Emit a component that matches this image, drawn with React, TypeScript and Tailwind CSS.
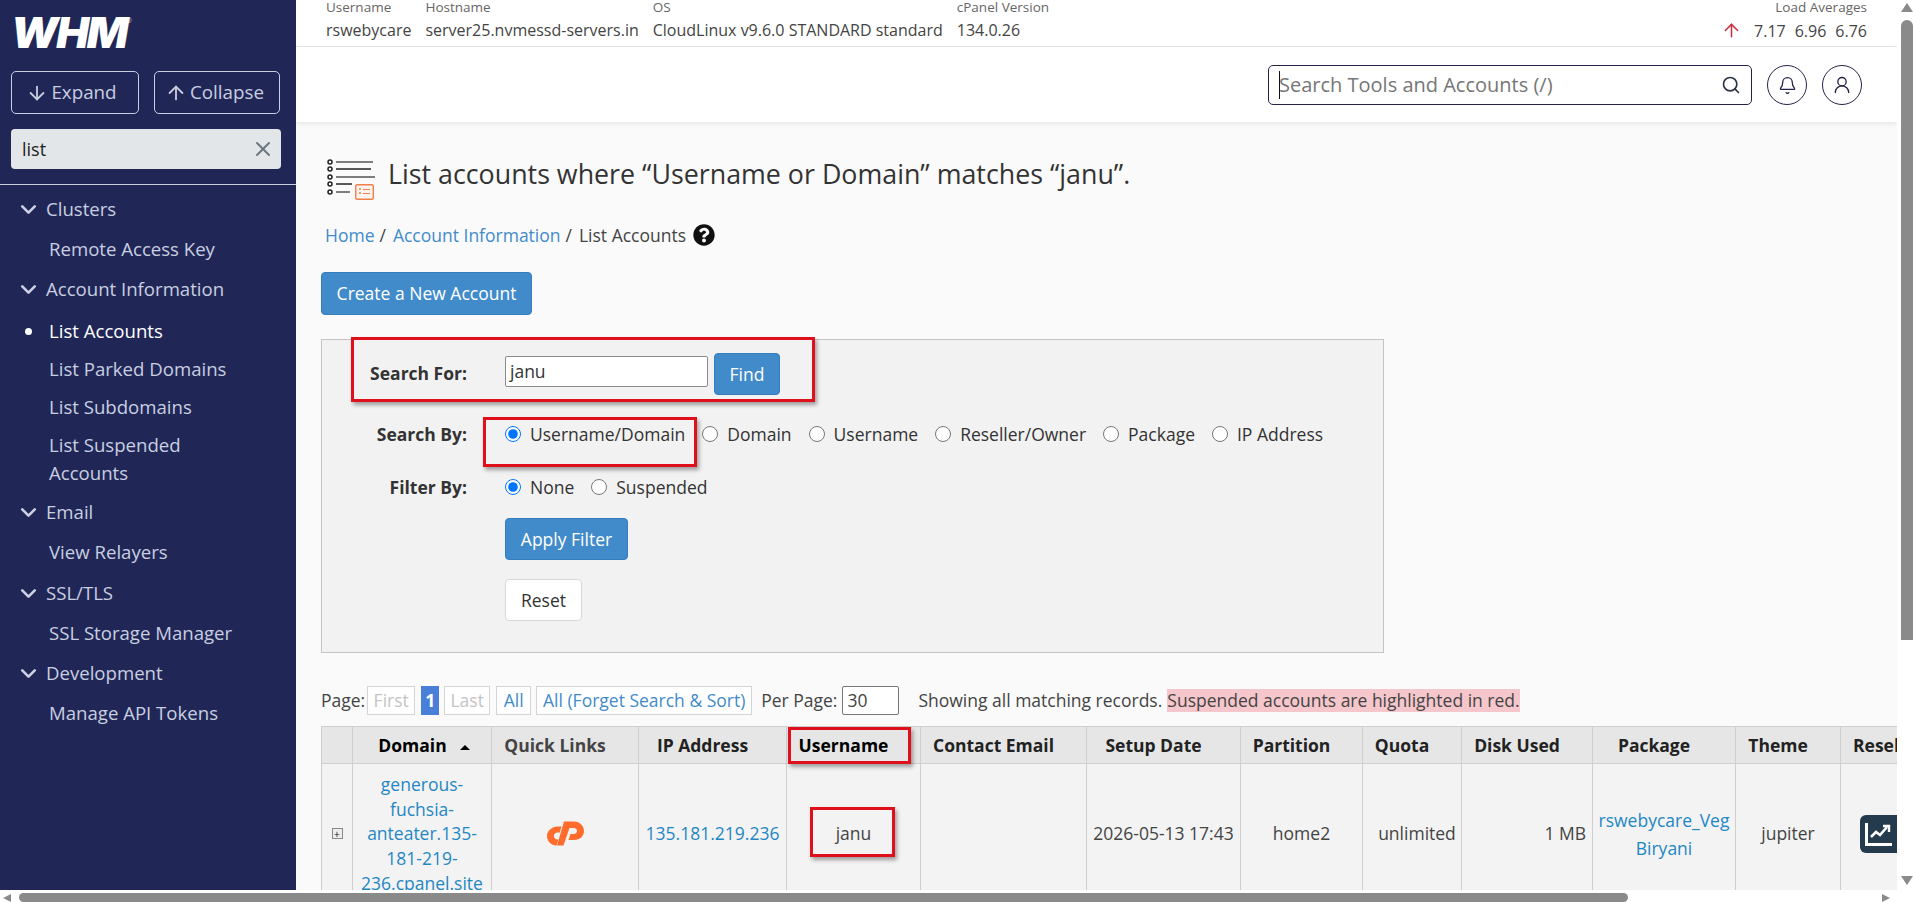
import { ArrowDown, ArrowUp, ChevronDown, X, Search, Bell, UserRound } from "lucide-react";
import { FaQuestionCircle } from "react-icons/fa";

const SideHead = ({ label }: { label: string }) => (
  <div className="flex h-[40px] items-center pl-[16px] text-[18.6px] text-[#c9cee0]">
    <ChevronDown size={25} strokeWidth={2.5} className="mr-[5px] text-[#cdd2e2]" />
    <span>{label}</span>
  </div>
);

const SideItem = ({ label, active, className = "my-[1px]" }: { label: string; active?: boolean; className?: string }) => (
  <div className={`relative py-[5px] pl-[49px] pr-[40px] text-[18.6px] leading-[28px] ${active ? "text-white" : "text-[#c9cee0]"} ${className}`}>
    {active && <span className="absolute left-[25px] top-[16px] h-[7px] w-[7px] rounded-full bg-white" />}
    {label}
  </div>
);

const Radio = ({ label, checked, name }: { label: string; checked?: boolean; name: string }) => (
  <label className="flex items-center gap-[9px]">
    <input type="radio" name={name} defaultChecked={checked} className="m-0 h-[16px] w-[16px]" />
    <span>{label}</span>
  </label>
);

const PageBtn = ({ label, muted, className }: { label: string; muted?: boolean; className: string }) => (
  <span className={`flex h-[29px] items-center justify-center border border-[#d4d4d4] bg-white ${muted ? "text-[#c4c4c4]" : "text-[#428bca]"} ${className}`}>{label}</span>
);

const Th = ({ children, className = "" }: { children?: React.ReactNode; className?: string }) => (
  <th className={`border border-[#cfcfcf] bg-[#e6e6e6] p-0 text-center text-[17.5px] font-bold ${className}`}>{children}</th>
);

const Td = ({ children, className = "" }: { children?: React.ReactNode; className?: string }) => (
  <td className={`border border-[#cfcfcf] bg-[#f3f3f3] px-[6px] py-[8px] text-center align-middle text-[17.5px] leading-[24.7px] ${className}`}>{children}</td>
);

const Annot = ({ className }: { className: string }) => (
  <div className={`pointer-events-none absolute border-[3px] border-[#e00f1c] shadow-[2px_3px_4px_rgba(0,0,0,0.35)] ${className}`} />
);

export default function App() {
  return (
    <div className="flex h-[902px] w-full flex-col overflow-hidden bg-white font-['Open_Sans',sans-serif] text-[#333]">
      <div className="flex h-[890px] min-h-0">
        {/* Sidebar */}
        <aside className="flex w-[296px] shrink-0 flex-col bg-[#202757]">
          <div className="flex h-[71px] items-start pl-[11px] pt-[3px]">
            <span className="origin-left scale-x-[1.04] font-['Inter',sans-serif] text-[42px] font-black italic leading-[60px] tracking-[-2px] text-white">
              WHM
            </span>
            <span className="ml-[4px] mt-[13px] text-[7px] text-[#ccd]">®</span>
          </div>
          <div className="flex gap-[15px] pl-[11px]">
            <button className="flex h-[43px] w-[128px] items-center justify-center gap-[3px] rounded-[5px] border border-[#c9cee0] pr-[7px] text-[18.8px] text-[#c9cee0]">
              <ArrowDown size={22} strokeWidth={2} /> Expand
            </button>
            <button className="flex h-[43px] w-[126px] items-center justify-center gap-[3px] rounded-[5px] border border-[#c9cee0] pr-[5px] text-[18.8px] text-[#c9cee0]">
              <ArrowUp size={22} strokeWidth={2} /> Collapse
            </button>
          </div>
          <div className="ml-[11px] mr-[15px] mt-[15px] flex h-[40px] items-center justify-between rounded-[4px] bg-[#e3e6e8] pl-[11px] pr-[6px] text-[18px] text-[#222]">
            <span>list</span>
            <X size={24} strokeWidth={2} className="text-[#6b7780]" />
          </div>
          <div className="mt-[15px] h-px bg-[#c9cee0]" />
          <nav className="pt-[4px]">
            <SideHead label="Clusters" />
            <SideItem label="Remote Access Key" />
            <SideHead label="Account Information" />
            <SideItem label="List Accounts" active className="mt-[3px]" />
            <SideItem label="List Parked Domains" className="my-0" />
            <SideItem label="List Subdomains" className="my-0" />
            <SideItem label="List Suspended Accounts" className="my-0" />
            <SideHead label="Email" />
            <SideItem label="View Relayers" className="mb-[2px] mt-[1px]" />
            <SideHead label="SSL/TLS" />
            <SideItem label="SSL Storage Manager" />
            <SideHead label="Development" />
            <SideItem label="Manage API Tokens" />
          </nav>
        </aside>

        {/* Main */}
        <main className="flex min-w-0 flex-1 flex-col overflow-hidden bg-[#fafafa]">
          <div className="flex h-[47px] shrink-0 items-start justify-between border-b border-[#e6e6e6] bg-white px-[30px] text-[#444]">
            <div className="flex">
              <div className="mr-[14px]">
                <div className="text-[13.5px] leading-[15px] text-[#666]">Username</div>
                <div className="mt-[5px] text-[16px] leading-[20px]">rswebycare</div>
              </div>
              <div className="mr-[14px]">
                <div className="text-[13.5px] leading-[15px] text-[#666]">Hostname</div>
                <div className="mt-[5px] text-[16px] leading-[20px]">server25.nvmessd-servers.in</div>
              </div>
              <div className="mr-[14px]">
                <div className="text-[13.5px] leading-[15px] text-[#666]">OS</div>
                <div className="mt-[5px] text-[16px] leading-[20px]">CloudLinux v9.6.0 STANDARD standard</div>
              </div>
              <div>
                <div className="text-[13.5px] leading-[15px] text-[#666]">cPanel Version</div>
                <div className="mt-[5px] text-[16px] leading-[20px]">134.0.26</div>
              </div>
            </div>
            <div className="text-right">
              <div className="text-[13.5px] leading-[15px] text-[#666]">Load Averages</div>
              <div className="mt-[5px] flex items-center justify-end gap-[9px] text-[16px] leading-[20px]">
                <ArrowUp size={21} strokeWidth={1.75} className="mr-[3px] text-[#c9303e]" />
                <span>7.17</span>
                <span>6.96</span>
                <span>6.76</span>
              </div>
            </div>
          </div>
          <header className="flex h-[75px] shrink-0 items-start justify-end gap-[15px] bg-white pr-[35px] pt-[18px] shadow-[0_2px_5px_rgba(0,0,0,0.08)]">
            <div className="relative flex h-[40px] w-[484px] items-center justify-between rounded-[5px] border border-[#23234a] px-[10px] text-[20px] text-[#767676]">
              <span className="absolute left-[10px] top-[5px] h-[28px] w-px bg-[#111]" />
              <span className="leading-[26px]">Search Tools and Accounts (/)</span>
              <Search size={20} strokeWidth={2} className="text-[#2b3440]" />
            </div>
            <button className="flex h-[40px] w-[40px] items-center justify-center rounded-full border border-[#23234a] text-[#23234a]">
              <Bell size={19} strokeWidth={1.6} />
            </button>
            <button className="flex h-[40px] w-[40px] items-center justify-center rounded-full border border-[#23234a] text-[#23234a]">
              <UserRound size={20} strokeWidth={1.6} />
            </button>
          </header>

          <div className="min-h-0 flex-1 overflow-hidden pl-[25px] pt-[36px]">
            <div className="flex h-[44px] items-start pl-[5px]">
              <svg width="50" height="44" viewBox="0 0 50 44" fill="none" className="shrink-0">
                <g stroke="#222" strokeWidth="1.5">
                  <circle cx="4" cy="4" r="2" />
                  <circle cx="4" cy="11" r="2" />
                  <circle cx="4" cy="19" r="2" />
                  <circle cx="4" cy="26" r="2" />
                  <circle cx="4" cy="34" r="2" />
                </g>
                <g stroke="#555" strokeWidth="1.5">
                  <path d="M10 4H47" />
                  <path d="M10 11H45" stroke="#222" />
                  <path d="M10 19H49" />
                  <path d="M10 26H26" stroke="#222" />
                  <path d="M10 34H24" />
                </g>
                <rect x="29.7" y="26.7" width="17.6" height="14.6" rx="1.5" stroke="#ee7f4b" strokeWidth="1.4" fill="#fdf3ee" />
                <path d="M33 31H35M33 35H35" stroke="#ee7f4b" strokeWidth="1.6" />
                <path d="M37 31.5H44M37 35.5H44" stroke="#ee7f4b" strokeWidth="1.2" />
              </svg>
              <h1 className="ml-[12px] text-[26.8px] font-normal leading-[32px] text-[#333]">
                List accounts where “Username or Domain” matches “janu”.
              </h1>
            </div>

            <div className="mt-[21px] flex h-[24px] items-center pl-[4px] text-[17.5px] text-[#444]">
              <span className="text-[#428bca]">Home</span>
              <span className="ml-[5px]">/</span>
              <span className="ml-[7px] text-[#428bca]">Account Information</span>
              <span className="ml-[5px]">/</span>
              <span className="ml-[7px]">List Accounts</span>
              <FaQuestionCircle size={22} className="ml-[7px] text-[#111]" />
            </div>

            <button className="mt-[25px] flex h-[43px] w-[211px] items-center justify-center rounded-[4px] border border-[#357ebd] bg-[#428bca] text-[17.5px] text-white">
              Create a New Account
            </button>

            <div className="relative mt-[24px] h-[314px] w-[1063px] border border-[#c4c4c4] bg-[#f2f2f2] pt-[13px] text-[17.5px]">
              <div className="grid grid-cols-[145px_1fr] gap-x-[38px]">
                <div className="flex h-[42px] items-center justify-end pb-[2px] font-bold">Search For:</div>
                <div className="flex items-start gap-[6px]">
                  <div className="mt-[3px] flex h-[31px] w-[203px] items-center rounded-[2px] border border-[#8a8a8a] bg-white pl-[4px] text-[#333]">janu</div>
                  <button className="flex h-[42px] w-[66px] items-center justify-center rounded-[4px] border border-[#357ebd] bg-[#428bca] text-white">Find</button>
                </div>

                <div className="mt-[27px] flex h-[24px] items-center justify-end font-bold">Search By:</div>
                <div className="mt-[27px] flex h-[24px] items-center gap-[17px]">
                  <Radio name="by" label="Username/Domain" checked />
                  <Radio name="by" label="Domain" />
                  <Radio name="by" label="Username" />
                  <Radio name="by" label="Reseller/Owner" />
                  <Radio name="by" label="Package" />
                  <Radio name="by" label="IP Address" />
                </div>

                <div className="mt-[29px] flex h-[24px] items-center justify-end font-bold">Filter By:</div>
                <div className="mt-[29px] flex h-[24px] items-center gap-[17px]">
                  <Radio name="filter" label="None" checked />
                  <Radio name="filter" label="Suspended" />
                </div>

                <div />
                <button className="mt-[19px] flex h-[42px] w-[123px] items-center justify-center rounded-[4px] border border-[#357ebd] bg-[#428bca] text-white">Apply Filter</button>

                <div />
                <button className="mt-[19px] flex h-[42px] w-[77px] items-center justify-center rounded-[4px] border border-[#d8d8d8] bg-white text-[#333]">Reset</button>
              </div>
              <Annot className="left-[29px] top-[-3px] h-[65px] w-[464px]" />
              <Annot className="left-[161px] top-[77px] h-[50px] w-[214px]" />
            </div>

            <div className="mt-[33px] flex h-[29px] items-center whitespace-nowrap text-[17.5px] text-[#444]">
              <span>Page:</span>
              <PageBtn label="First" muted className="ml-[2px] w-[48px]" />
              <span className="ml-[6px] flex h-[29px] w-[18px] items-center justify-center bg-[#4a7fd8] font-bold text-white">1</span>
              <PageBtn label="Last" muted className="ml-[5px] w-[46px]" />
              <PageBtn label="All" className="ml-[6px] w-[35px]" />
              <PageBtn label="All (Forget Search & Sort)" className="ml-[5px] w-[216px]" />
              <span className="ml-[9px]">Per Page:</span>
              <span className="ml-[5px] flex h-[29px] w-[57px] items-center rounded-[2px] border border-[#777] bg-white pl-[4px]">30</span>
              <span className="ml-[19px]">Showing all matching records.</span>
              <span className="ml-[5px] bg-[#f5c6cb] leading-[23px]">Suspended accounts are highlighted in red.</span>
            </div>

            <div className="relative mt-[11px] overflow-hidden">
              <table className="w-[1640px] table-fixed border-collapse">
                <colgroup>
                  <col className="w-[31px]" />
                  <col className="w-[139px]" />
                  <col className="w-[147px]" />
                  <col className="w-[148px]" />
                  <col className="w-[134px]" />
                  <col className="w-[166px]" />
                  <col className="w-[154px]" />
                  <col className="w-[122px]" />
                  <col className="w-[99px]" />
                  <col className="w-[131px]" />
                  <col className="w-[143px]" />
                  <col className="w-[105px]" />
                  <col className="w-[121px]" />
                </colgroup>
                <thead>
                  <tr className="h-[37px] text-[#222]">
                    <Th />
                    <Th className="pl-[4px]">
                      <span className="text-black">Domain</span>
                      <span className="ml-[13px] inline-block border-x-[5px] border-b-[5px] border-x-transparent border-b-black align-middle" />
                    </Th>
                    <Th className="pr-[20px] text-[#444]">Quick Links</Th>
                    <Th className="pr-[20px]">IP Address</Th>
                    <Th className="pr-[20px] text-black">Username</Th>
                    <Th className="pr-[20px]">Contact Email</Th>
                    <Th className="pr-[20px]">Setup Date</Th>
                    <Th className="pr-[20px]">Partition</Th>
                    <Th className="pr-[20px]">Quota</Th>
                    <Th className="pr-[20px]">Disk Used</Th>
                    <Th className="pr-[20px]">Package</Th>
                    <Th className="pr-[20px]">Theme</Th>
                    <Th className="whitespace-nowrap pl-[12px] !text-left">Reseller</Th>
                  </tr>
                </thead>
                <tbody className="text-[#444]">
                  <tr>
                    <Td className="!px-0">
                      <span className="mx-auto flex h-[11px] w-[11px] items-center justify-center border border-[#888] bg-[#eee] text-[11px] leading-none text-[#222]">+</span>
                    </Td>
                    <Td className="!px-[2px] text-[#1f87c4]">generous-<br />fuchsia-<br />anteater.135-<br />181-219-<br />236.cpanel.site</Td>
                    <Td>
                      <svg width="37" height="25" viewBox="0 0 37 25" className="mx-auto block" fill="#ff6c2c">
                        <path d="M14.5 5.5H11C4.5 5.5 0 10 0 15C0 20.5 4.5 24.5 9.5 24.5L11.5 18.5H10.5C8.5 18.5 7 17 7 15C7 13 8.5 11.5 10.5 11.5H12.7Z" />
                        <path d="M17 0.5H27C33 0.5 37 5 37 10C37 15 33 19 27 19H21.5L23.5 13H26.5C28.5 13 30 11.8 30 10C30 8.2 28.5 7 26.5 7H22.5L16.5 24.5H10Z" />
                      </svg>
                    </Td>
                    <Td className="!px-0 text-[#1f87c4]">135.181.219.236</Td>
                    <Td>janu</Td>
                    <Td />
                    <Td className="whitespace-nowrap !px-0">2026-05-13 17:43</Td>
                    <Td>home2</Td>
                    <Td className="!pl-[10px] !pr-0">unlimited</Td>
                    <Td className="!text-right">1 MB</Td>
                    <Td className="!px-0 !leading-[28px] text-[#1f87c4]">rswebycare_Veg<br />Biryani</Td>
                    <Td>jupiter</Td>
                    <Td className="!pl-[19px] !text-left">
                      <span className="flex h-[38px] w-[44px] items-center rounded-[6px] bg-[#243a4d] pl-[5px] text-white">
                        <svg width="28" height="24" viewBox="0 0 28 24" fill="none" stroke="currentColor" strokeWidth="3">
                          <path d="M1.5 1V22.5H27" />
                          <path d="M6 15L11 10L15 13L22 5" strokeWidth="2.6" />
                          <path d="M18 4H24V10" strokeWidth="2.4" />
                        </svg>
                      </span>
                    </Td>
                  </tr>
                </tbody>
              </table>
              <Annot className="left-[467px] top-[1px] h-[37px] w-[123px]" />
              <Annot className="left-[489px] top-[81px] h-[50px] w-[85px]" />
            </div>
          </div>
        </main>

        {/* Vertical scrollbar */}
        <div className="flex w-[16px] shrink-0 flex-col items-end bg-white">
          <span className="mt-[3px] h-0 w-0 border-x-[6.5px] border-b-[9px] border-x-transparent border-b-[#8a8a8a]" />
          <span className="mt-[8px] h-[620px] w-[12px] rounded-t-[6px] bg-[#8a8a8a]" />
          <span className="mb-[5px] mt-auto h-0 w-0 border-x-[6.5px] border-t-[9px] border-x-transparent border-t-[#8a8a8a]" />
        </div>
      </div>

      {/* Horizontal scrollbar */}
      <div className="flex h-[12px] shrink-0 items-end bg-white">
        <span className="ml-[3px] h-0 w-0 border-y-[4.5px] border-r-[8px] border-y-transparent border-r-[#8a8a8a]" />
        <span className="ml-[8px] h-[9px] w-[1609px] rounded-[5px] bg-[#8a8a8a]" />
        <span className="ml-[254px] h-0 w-0 border-y-[4.5px] border-l-[8px] border-y-transparent border-l-[#8a8a8a]" />
      </div>
    </div>
  );
}
